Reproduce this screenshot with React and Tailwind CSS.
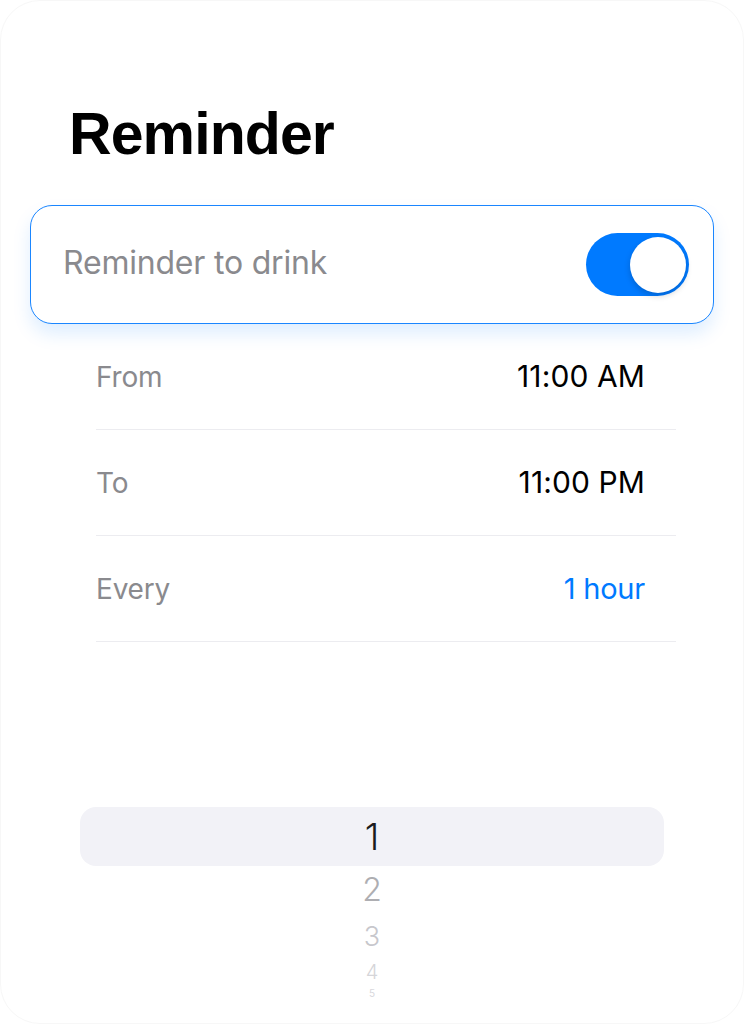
import React from "react";

function Row({ label, value, valueClass }) {
  return (
    <div className="flex h-[106px] items-center justify-between border-b border-[#ececf0] pr-[31px]">
      <span className="text-[28px] text-[#8a8a8e] tracking-[-0.2px]">{label}</span>
      <span className={valueClass}>{value}</span>
    </div>
  );
}

export default function App() {
  return (
    <div className="w-[744px] h-[1024px] bg-white overflow-hidden">
      <div
        className="w-[744px] h-[1024px] bg-white rounded-[40px] border border-[#f7f7f7] px-[29px] flex flex-col"
        style={{ fontFamily: "Inter, 'Noto Sans', sans-serif" }}
      >
        <h1
          className="pt-[98px] pl-[39px] text-[59px] leading-[70px] font-bold text-black tracking-[-0.9px]"
          style={{ fontFamily: "'Liberation Sans', Arial, sans-serif" }}
        >
          Reminder
        </h1>

        <div className="mt-[36px] h-[119px] rounded-[22px] border border-[#1a86ff] bg-white shadow-[0_10px_18px_rgba(0,122,255,0.13)] flex items-center justify-between pl-[32px] pr-[24px]">
          <span className="text-[32px] leading-[40px] pb-[4px] text-[#8a8a8e] tracking-[-0.2px]">Reminder to drink</span>
          <div className="w-[103px] h-[63px] rounded-full bg-[#007aff] flex items-center justify-end pr-[3px]">
            <div className="w-[56px] h-[56px] rounded-full bg-white shadow-[0_3px_6px_rgba(0,0,0,0.18)]" />
          </div>
        </div>

        <div className="ml-[66px] mr-[38px]">
          <Row label="From" value="11:00 AM" valueClass="text-[30px] text-black tracking-[0.1px]" />
          <Row label="To" value="11:00 PM" valueClass="text-[30px] text-black tracking-[0.1px]" />
          <Row label="Every" value="1 hour" valueClass="text-[29px] text-[#007aff] tracking-[-0.2px]" />
        </div>

        <div className="mt-[165px] mx-[50px] flex flex-col items-center">
          <div className="w-full h-[59px] rounded-[16px] bg-[#f2f2f7] flex items-center justify-center">
            <span className="text-[37px] text-[#1c1c1e] font-light">1</span>
          </div>
          <div className="h-[48px] flex items-center justify-center text-[32px] text-[#aeaeb2] font-light">2</div>
          <div className="h-[46px] flex items-center justify-center text-[27px] text-[#c7c7cc] font-light">3</div>
          <div className="h-[24px] flex items-center justify-center text-[20px] text-[#d5d5d9] font-light">4</div>
          <div className="h-[18px] flex items-center justify-center text-[10px] text-[#d8d8dc]">5</div>
        </div>
      </div>
    </div>
  );
}
